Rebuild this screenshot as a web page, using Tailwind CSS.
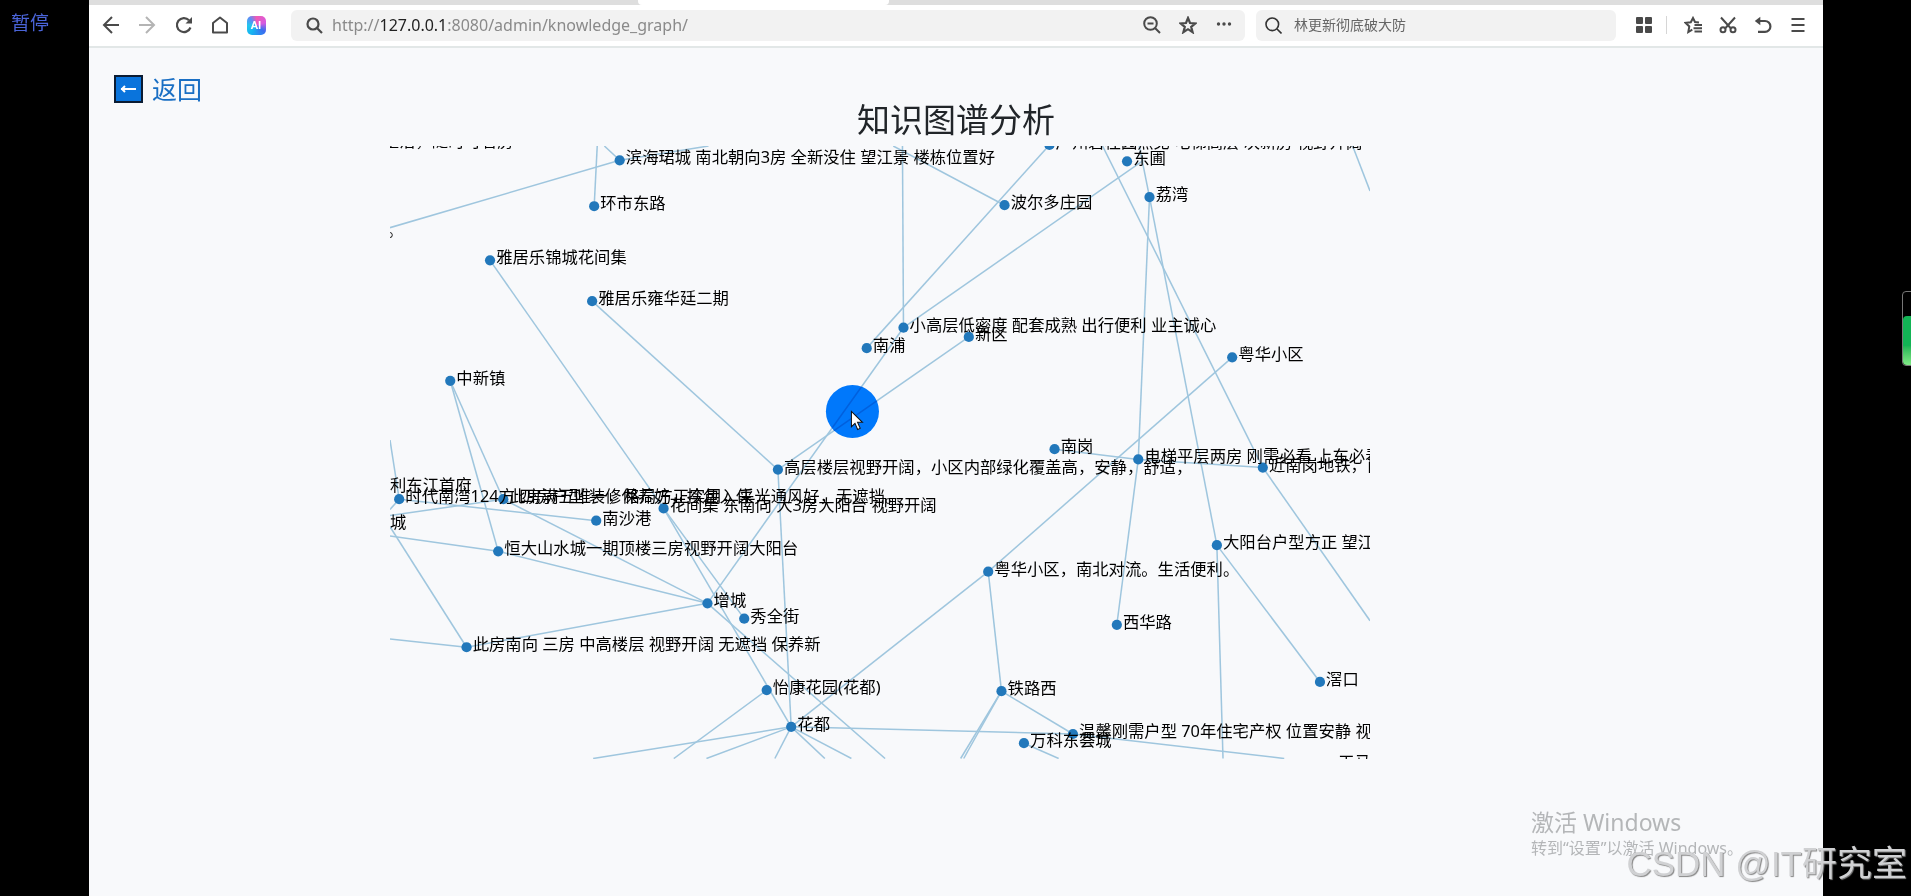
<!DOCTYPE html>
<html lang="zh-CN">
<head>
<meta charset="utf-8">
<title>知识图谱分析</title>
<script src="https://cdn.jsdelivr.net/npm/@tailwindcss/browser@4"></script>
</head>
<body class="flex min-h-screen overflow-hidden bg-black font-['Noto_Sans','Noto_Sans_CJK_SC',sans-serif] text-[#212529]">

<aside class="w-[89px] shrink-0 pl-[11px] pt-[11px]">
  <p class="text-[19px] leading-6 text-[#4a64d8]">暂停</p>
</aside>

<div class="relative flex min-w-0 flex-1 flex-col bg-[#f8f9fb]">
  <header class="bg-white">
    <div class="flex h-[5px] bg-[#dedede]">
      <div class="ml-[549px] w-[251px] rounded-b-sm bg-white"></div>
    </div>
    <nav class="flex h-[43px] items-center border-b-2 border-[#e2e7e7] pb-px pl-1 pr-2 text-[#4a4a4a]" aria-label="浏览器工具栏">
      <button class="flex h-8 w-9 items-center justify-center" aria-label="后退">
        <svg class="size-[18px]" viewBox="0 0 18 18" fill="none" stroke="currentColor" stroke-width="2"><path d="M17 9H2M10 1 2 9l8 8"/></svg>
      </button>
      <button class="flex h-8 w-9 items-center justify-center text-[#b4b4b4]" aria-label="前进">
        <svg class="size-[18px]" viewBox="0 0 18 18" fill="none" stroke="currentColor" stroke-width="2"><path d="M1 9h15M8 1l8 8-8 8"/></svg>
      </button>
      <button class="flex h-8 w-[37px] items-center justify-center" aria-label="刷新">
        <svg class="size-[18px]" viewBox="0 0 18 18" fill="none" stroke="currentColor" stroke-width="2.2"><path d="M15.5 11.5A7 7 0 1 1 14 4.2"/><path d="M17 1v6.500h-6.500z" fill="currentColor" stroke="none"/></svg>
      </button>
      <button class="flex h-8 w-9 items-center justify-center" aria-label="主页">
        <svg class="size-[18px]" viewBox="0 0 18 18" fill="none" stroke="currentColor" stroke-width="2" stroke-linejoin="round"><path d="M2 7 9 1.500 16 7v9.500H2z"/></svg>
      </button>
      <button class="flex h-8 w-9 items-center justify-center" aria-label="AI 助手">
        <span class="flex size-[19px] items-center justify-center rounded-[5px] bg-[conic-gradient(from_0deg,#f05bb5,#d65ae0_20%,#3b6df0_35%,#16b4f0_60%,#22c7ee_75%,#5c8df5_88%,#f05bb5)] font-['Roboto'] text-[11px] font-bold leading-none text-white">AI</span>
      </button>

      <div class="ml-[17px] flex h-[31px] min-w-0 flex-1 items-center rounded-md bg-[#f2f2f2] pl-[15px] pr-[3px]">
        <svg class="size-[17px] shrink-0" viewBox="0 0 17 17" fill="none" stroke="currentColor" stroke-width="2.200"><circle cx="7" cy="7" r="5.500"/><path d="m11 11 5 5"/></svg>
        <a href="#" class="ml-[9px] flex-1 truncate text-base leading-6 text-[#8a8a8a]">http://<span class="text-[#222]">127.0.0.1</span>:8080/admin/knowledge_graph/</a>
        <button class="flex h-8 w-9 items-center justify-center" aria-label="缩小">
          <svg class="size-[18px]" viewBox="0 0 18 18" fill="none" stroke="currentColor" stroke-width="2"><circle cx="7.500" cy="7.500" r="6.300"/><path d="m12 12 5 5M4.500 7.500h6"/></svg>
        </button>
        <button class="flex h-8 w-9 items-center justify-center" aria-label="收藏">
          <svg class="size-[18px]" viewBox="0 0 18 18" fill="none" stroke="currentColor" stroke-width="2.200"><path d="m9 2 2 5 5.400.4-4.200 3.500 1.400 5.300L9 13.200l-4.600 3 1.400-5.300L1.600 7.400 7 7z"/></svg>
        </button>
        <button class="flex h-8 w-9 items-center justify-center" aria-label="更多">
          <svg class="size-[16px]" viewBox="0 0 16 16" fill="currentColor"><circle cx="2.500" cy="7" r="1.700"/><circle cx="8" cy="7" r="1.700"/><circle cx="13.500" cy="7" r="1.700"/></svg>
        </button>
      </div>

      <label class="ml-[11px] flex h-[31px] w-[360px] items-center rounded-md bg-[#f2f2f2] pl-[9px]">
        <svg class="size-[17px] shrink-0" viewBox="0 0 17 17" fill="none" stroke="#333" stroke-width="1.600"><circle cx="7.300" cy="7.300" r="6.300"/><path d="m12 12 4.500 4.500"/></svg>
        <input type="text" value="林更新彻底破大防" aria-label="搜索" class="ml-3 min-w-0 flex-1 bg-transparent text-sm text-[#666] outline-none">
      </label>

      <button class="ml-2.5 flex h-8 w-9 items-center justify-center" aria-label="应用">
        <svg class="size-4" viewBox="0 0 16 16" fill="currentColor"><rect width="7" height="7" rx="1"/><rect x="9" width="7" height="7" rx="1"/><rect y="9" width="7" height="7" rx="1"/><rect x="9" y="9" width="7" height="7" rx="1"/></svg>
      </button>
      <span class="ml-1 mr-2 h-[18px] w-px bg-[#d6d6d6]"></span>
      <button class="flex h-8 w-[35px] items-center justify-center" aria-label="收藏夹">
        <svg class="size-[18px]" viewBox="0 0 18 18" fill="none" stroke="currentColor" stroke-width="2"><path d="M15 6.500 11 6 9 2 6.800 6.300 1.500 6.800l3.800 3.600L4.300 16l4-2.300"/><path d="M10.500 9H18M9.500 12.200H18M10.500 15.400H18"/></svg>
      </button>
      <button class="flex h-8 w-[35px] items-center justify-center" aria-label="截图">
        <svg class="size-[18px]" viewBox="0 0 18 18" fill="none" stroke="currentColor" stroke-width="2"><path d="m2 1.500 9.500 10.500M16 1.500 6.500 12"/><circle cx="4" cy="13.800" r="2.500"/><circle cx="14" cy="13.800" r="2.500"/></svg>
      </button>
      <button class="flex h-8 w-[35px] items-center justify-center" aria-label="撤销">
        <svg class="size-[18px]" viewBox="0 0 18 18" fill="none" stroke="currentColor" stroke-width="2.200"><path d="M4 5h7a5.400 5.400 0 0 1 0 10.800H4"/><path d="M.8 5 6.300.8v8.400z" fill="currentColor" stroke="none"/></svg>
      </button>
      <button class="flex h-8 w-[35px] items-center justify-center" aria-label="菜单">
        <svg class="size-[16px]" viewBox="0 0 16 16" fill="none" stroke="currentColor" stroke-width="2"><path d="M1.500 2h13M1.500 8h13M1.500 14h13"/></svg>
      </button>
    </nav>
  </header>

  <main class="flex-1">
    <a href="#" class="ml-[25px] mt-[23px] flex h-9 w-fit items-center gap-[9px] text-[25px] leading-9 text-[#1a6fc4]">
      <svg class="h-7 w-[29px]" viewBox="0 0 29 28" fill="none"><rect x="1" y="1" width="27" height="26" fill="#0a74dc" stroke="#0b1c33" stroke-width="2"/><path d="M7 14h15M11 11l-3 3 3 3" stroke="#fff" stroke-width="2"/></svg>
      返回
    </a>
    <h1 class="-mt-[9px] mb-[5px] text-center text-[33px] leading-[43px]">知识图谱分析</h1>
    <div class="mx-auto w-full max-w-[1163px] px-[15px]">
      <svg id="graph" class="block w-full max-w-[980px] font-['Noto_Sans','Noto_Sans_CJK_SC',sans-serif] text-base" viewBox="0 0 960 600" role="img" aria-label="知识图谱">
        <g id="links" class="stroke-[#9fc6de]" stroke-width="1.500"></g>
        <g id="nodes" class="fill-[#2278bb]"></g>
        <g id="labels" class="fill-black"></g>
        <circle class="fill-[#007bff] mix-blend-multiply" cx="453" cy="260" r="26"/>
        <path d="M452 260v15l3.500-3.300 2.600 6 2.500-1.100-2.600-5.900h4.800z" fill="#fff" stroke="#111" stroke-width="1"/>
      </svg>
    </div>
  </main>

  <div class="absolute bottom-9 right-20 text-[#b4b6b8]">
    <p class="text-[23px] leading-7">激活 Windows</p>
    <p class="text-base leading-6">转到“设置”以激活 Windows。</p>
  </div>
</div>

<aside class="relative w-[88px] shrink-0 overflow-hidden">
  <div class="absolute -right-1 top-[291px] flex h-[75px] w-[13px] items-end rounded border border-[#777]">
    <div class="h-[49px] w-full rounded-sm bg-linear-to-b from-[#12b455] from-60% to-[#7fea86]"></div>
  </div>
</aside>

<p class="fixed bottom-2 right-1 text-[35px] leading-[48px] font-['Liberation_Sans','Noto_Sans_CJK_SC',sans-serif] whitespace-nowrap text-[#d0d1d3] [text-shadow:1px_1px_1px_#858585]">CSDN @IT研究室</p>

<script>
const nodes = [
  [225,14,'滨海珺城 南北朝向3房 全新没住 望江景 楼栋位置好'],
  [200,59,'环市东路'],
  [98,112,'雅居乐锦城花间集'],
  [198,152,'雅居乐雍华廷二期'],
  [59,230,'中新镇'],
  [467,198,'南浦'],
  [646,-1,'广州碧桂园点见  电梯高层 次新房 视野开阔 中'],
  [722,15,'东圃'],
  [744,50,'荔湾'],
  [602,58,'波尔多庄园'],
  [503,178,'小高层低密度 配套成熟 出行便利 业主诚心'],
  [567,187,'新区'],
  [825,207,'粤华小区'],
  [651,297,'南岗'],
  [733,307,'电梯平层两房 刚需必看 上车必看'],
  [855,315,'近南岗地铁，南北对流'],
  [810,391,'大阳台户型方正 望江景'],
  [586,417,'粤华小区，南北对流。生活便利。'],
  [712,469,'西华路'],
  [911,525,'滘口'],
  [599,534,'铁路西'],
  [669,576,'温馨刚需户型 70年住宅产权 位置安静 视野开阔'],
  [621,585,'万科东荟城'],
  [380,317,'高层楼层视野开阔，小区内部绿化覆盖高，安静，舒适，'],
  [9,346,'时代南湾124方 四房户型 装修保养好，拎包入住'],
  [111,346,'此房满五唯一，格局方正实用，采光通风好，无遮挡。'],
  [268,355,'花间集 东南向 大3房大阳台 视野开阔'],
  [202,367,'南沙港'],
  [106,397,'恒大山水城一期顶楼三房视野开阔大阳台'],
  [311,448,'增城'],
  [347,463,'秀全街'],
  [75,491,'此房南向 三房 中高楼层 视野开阔 无遮挡 保养新'],
  [369,533,'怡康花园(花都)'],
  [393,569,'花都'],
  // nodes outside the visible area whose labels reach into it
  [-29,-2,'装整洁，随时可看房'],
  [-73,85,'生活便利。'],
  [-22,335,'保利东江首府'],
  [-38,371,'凤凰城'],
  [923,606,'天马']
];
const links = [
  [225,14,0,80],[225,14,210,0],[225,14,312,0],[200,59,203,0],
  [98,112,268,355],[198,152,380,317],[59,230,106,397],[59,230,111,346],
  [467,198,646,-1],[503,178,502,0],[503,178,738,14],[503,178,311,448],
  [567,187,380,317],[602,58,493,0],[744,50,734,0],[744,50,733,307],
  [744,50,810,391],[698,0,855,315],[943,0,960,44],[825,207,586,417],
  [651,297,733,307],[733,307,855,315],[733,307,712,469],[855,315,960,465],
  [810,391,911,525],[810,391,816,600],[586,417,393,569],[586,417,599,534],
  [599,534,669,576],[599,534,559,600],[599,534,562,600],[393,569,669,576],
  [669,576,876,600],[621,585,655,600],[380,317,393,569],[9,346,0,356],
  [0,288,9,346],[9,346,202,367],[111,346,0,362],[111,346,311,448],
  [268,355,347,463],[268,355,393,569],[106,397,0,382],[106,397,311,448],
  [311,448,75,491],[311,448,485,600],[75,491,0,373],[75,491,0,483],
  [369,533,278,600],[393,569,199,600],[393,569,310,600],[393,569,377,600],
  [393,569,426,600],[393,569,452,600]
];
const add = (parent, tag, attrs, text) => {
  const el = document.createElementNS('http://www.w3.org/2000/svg', tag);
  for (const k in attrs) el.setAttribute(k, attrs[k]);
  if (text) el.textContent = text;
  document.getElementById(parent).appendChild(el);
};
links.forEach(([x1, y1, x2, y2]) => add('links', 'line', { x1, y1, x2, y2 }));
nodes.forEach(([x, y, label]) => {
  add('nodes', 'circle', { cx: x, cy: y, r: 5 });
  add('labels', 'text', { x: x + 6, y: y + 3 }, label);
});
</script>
</body>
</html>
